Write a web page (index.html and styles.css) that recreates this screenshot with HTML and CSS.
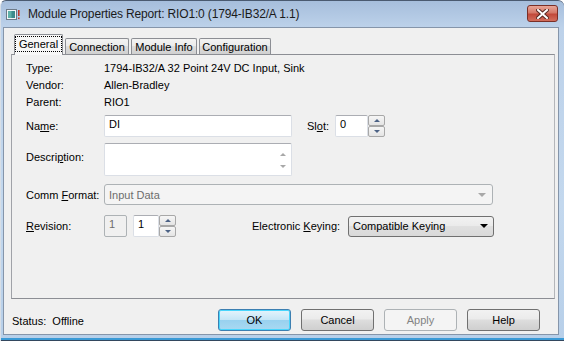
FILE: index.html
```html
<!DOCTYPE html>
<html lang="en">
<head>
  <meta charset="UTF-8" />
  <title>Module Properties Report</title>
  <link rel="stylesheet" href="styles.css">
</head>
<body>

  <div class="window">
    <div class="titlebar">
      <svg class="app-icon" width="14" height="11" viewBox="0 0 14 11">
        <rect x="0.5" y="0.5" width="10" height="10" fill="#f4f6f8" stroke="#6d7a88"/>
        <rect x="2" y="2" width="7" height="7" fill="#3d8a8c"/>
        <rect x="2" y="2" width="3.5" height="7" fill="#5fb0a8"/>
        <rect x="12" y="1" width="1.6" height="6" fill="#c0392b"/>
        <rect x="12" y="8.5" width="1.6" height="1.6" fill="#c0392b"/>
      </svg>
      <span class="title">Module Properties Report: RIO1:0 (1794-IB32/A 1.1)</span>
      <div class="close-btn">
        <svg width="13" height="10" viewBox="0 0 13 10">
          <path d="M2 1 L11 9 M11 1 L2 9" stroke="#5a2a24" stroke-width="4" stroke-linecap="square"/>
          <path d="M2 1 L11 9 M11 1 L2 9" stroke="#ffffff" stroke-width="2" stroke-linecap="square"/>
        </svg>
      </div>
    </div>

    <div class="client">
      <div class="tabs">
        <div class="tab active"><span class="focus">General</span></div>
        <div class="tab w-conn">Connection</div>
        <div class="tab w-info">Module Info</div>
        <div class="tab w-conf">Configuration</div>
      </div>

      <div class="panel">
        <div class="info-row"><span class="label">Type:</span><span>1794-IB32/A 32 Point 24V DC Input, Sink</span></div>
        <div class="info-row"><span class="label">Vendor:</span><span>Allen-Bradley</span></div>
        <div class="info-row"><span class="label">Parent:</span><span>RIO1</span></div>

        <div class="row name-row">
          <span class="label">Na<u>m</u>e:</span>
          <div class="textbox name-box">DI</div>
          <span class="slot-label">Sl<u>o</u>t:</span>
          <div class="textbox slot-box">0</div>
          <div class="spinner">
            <div class="spin-btn"><span class="tri-up"></span></div>
            <div class="spin-btn"><span class="tri-down"></span></div>
          </div>
        </div>

        <div class="row desc-row">
          <span class="label">Descri<u>p</u>tion:</span>
          <div class="textbox desc-box">
            <div class="scroll-arrows">
              <span class="tri-up grey"></span>
              <span class="tri-down grey"></span>
            </div>
          </div>
        </div>

        <div class="row comm-row">
          <span class="label">Comm <u>F</u>ormat:</span>
          <div class="combo disabled comm-box">
            <span>Input Data</span>
            <span class="tri-down grey big"></span>
          </div>
        </div>

        <div class="row rev-row">
          <span class="label"><u>R</u>evision:</span>
          <div class="textbox disabled major-box">1</div>
          <div class="textbox minor-box">1</div>
          <div class="spinner">
            <div class="spin-btn"><span class="tri-up"></span></div>
            <div class="spin-btn"><span class="tri-down"></span></div>
          </div>
          <span class="keying-label">Electronic <u>K</u>eying:</span>
          <div class="combo keying-box">
            <span>Compatible Keying</span>
            <span class="tri-down black big"></span>
          </div>
        </div>
      </div>

      <div class="footer">
        <span class="status">Status:&nbsp; Offline</span>
        <div class="buttons">
          <button class="btn default">OK</button>
          <button class="btn">Cancel</button>
          <button class="btn" disabled>Apply</button>
          <button class="btn">Help</button>
        </div>
      </div>
    </div>
  </div>

</body>
</html>
```

FILE: styles.css
```css
body {
  margin: 0;
  font-family: "Liberation Sans", Arial, sans-serif;
  font-size: 11px;
  color: #000;
}

.window {
  width: 564px;
  height: 341px;
  box-sizing: border-box;
  display: flex;
  flex-direction: column;
  background: linear-gradient(to bottom, #a6bedc, #bdd2ea 27px, #c3d8ee 60%, #b7cfe9);
  border-top: 1px solid #4a5a70;
  border-left: 1px solid #d7dee6;
  border-radius: 6px 6px 0 0;
  padding: 0 5px 6px 2px;
  box-shadow: inset 0 -1px 0 #33475e, inset 0 -3px 0 #3a9ad6;
}

/* title bar */
.titlebar {
  height: 26px;
  display: flex;
  align-items: center;
}

.app-icon {
  margin-left: 3px;
  flex: none;
}

.title {
  margin-left: 8px;
  font-family: "Liberation Sans", Arial, sans-serif;
  font-size: 12px;
  letter-spacing: -0.15px;
  color: #1b1b1b;
  flex: 1;
  padding-bottom: 1px;
}

.close-btn {
  align-self: flex-start;
  margin-top: 4px;
  margin-right: 1px;
  width: 31px;
  height: 17px;
  box-sizing: border-box;
  border: 1px solid #7a2f27;
  border-radius: 3px;
  background: linear-gradient(to bottom, #e8a597, #d47868 45%, #c2493a 55%, #d26e5d);
  display: flex;
  align-items: center;
  justify-content: center;
}

/* client area */
.client {
  flex: 1;
  background: #f0f0f0;
  border: 1px solid #8595aa;
  display: flex;
  flex-direction: column;
}

.tabs {
  height: 20px;
  margin-top: 6px;
  padding-left: 10px;
  display: flex;
  align-items: flex-end;
  gap: 2px;
  position: relative;
  z-index: 1;
}

.tab {
  height: 16px;
  box-sizing: border-box;
  border: 1px solid #8c8e94;
  border-bottom: none;
  border-radius: 2px 2px 0 0;
  background: linear-gradient(to bottom, #f3f3f3, #ebebeb 45%, #dddddd 50%, #d0d0d0);
  display: flex;
  align-items: center;
  justify-content: center;
  padding-top: 1px;
}

.tab.active {
  width: 49px;
  height: 21px;
  margin-bottom: -1px;
  background: #f7f7f7;
  padding-top: 0;
  padding-bottom: 2px;
}

.focus {
  border: 1px dotted #000;
  padding: 1px 3px 0;
  line-height: 13px;
}

.w-conn { width: 64px; }
.w-info { width: 66px; }
.w-conf { width: 72px; }

.panel {
  margin-left: 7px;
  width: 544px;
  height: 245px;
  box-sizing: border-box;
  border: 1px solid #8c8e94;
  border-left-color: #a0a2a8;
  border-right-color: #b4b6ba;
  padding: 4px 0 0 14px;
}

.info-row {
  height: 17px;
  display: flex;
  align-items: center;
}

.label {
  width: 78px;
  flex: none;
}

.row {
  display: flex;
  align-items: center;
}

.textbox {
  box-sizing: border-box;
  background: #fff;
  border: 1px solid #dbdfe6;
  border-top-color: #abadb3;
  border-radius: 2px;
  padding: 2px 4px;
}

.name-row {
  margin-top: 5px;
  height: 22px;
}

.name-box {
  width: 188px;
  height: 22px;
}

.slot-label {
  margin-left: 15px;
  width: 28px;
}

.slot-box {
  width: 33px;
  height: 22px;
}

.spinner {
  width: 17px;
  height: 22px;
  display: flex;
  flex-direction: column;
}

.spin-btn {
  flex: 1;
  box-sizing: border-box;
  border: 1px solid #a8a8a8;
  border-radius: 2px;
  background: linear-gradient(to bottom, #f6f6f6, #e4e4e4);
  display: flex;
  align-items: center;
  justify-content: center;
}

.tri-up,
.tri-down {
  width: 0;
  height: 0;
  border-left: 3px solid transparent;
  border-right: 3px solid transparent;
}

.tri-up { border-bottom: 3px solid #4c6285; }
.tri-down { border-top: 3px solid #4c6285; }
.tri-up.grey { border-bottom-color: #a8a8a8; }
.tri-down.grey { border-top-color: #a8a8a8; }

.tri-down.big {
  border-left-width: 4px;
  border-right-width: 4px;
  border-top-width: 4px;
}

.tri-down.black { border-top-color: #000; }

.desc-row {
  margin-top: 6px;
  height: 33px;
  align-items: flex-start;
}

.desc-row .label {
  margin-top: 8px;
}

.desc-box {
  width: 188px;
  height: 33px;
  display: flex;
  justify-content: flex-end;
  padding: 0;
}

.scroll-arrows {
  width: 17px;
  display: flex;
  flex-direction: column;
  justify-content: space-around;
  align-items: center;
  padding: 4px 0 3px;
}

.comm-row {
  margin-top: 8px;
  height: 21px;
}

.combo {
  box-sizing: border-box;
  height: 21px;
  border: 1px solid #707070;
  border-radius: 3px;
  background: linear-gradient(to bottom, #f2f2f2, #ebebeb 45%, #dddddd 50%, #cfcfcf);
  display: flex;
  align-items: center;
  justify-content: space-between;
  padding: 0 6px 0 4px;
}

.combo.disabled {
  background: #f4f4f4;
  border-color: #adb2b5;
  color: #6d6d6d;
}

.comm-box {
  width: 389px;
}

.rev-row {
  margin-top: 10px;
  height: 22px;
}

.major-box {
  width: 23px;
  height: 22px;
  background: #f0f0f0;
  border-color: #adb2b5;
  color: #6d6d6d;
}

.minor-box {
  margin-left: 6px;
  width: 26px;
  height: 22px;
}

.keying-label {
  margin-left: 76px;
  width: 96px;
}

.keying-box {
  width: 146px;
  height: 21px;
  background: linear-gradient(to bottom, #f2f2f2, #ebebeb 45%, #e0e0e0 50%, #d9d9d9);
  padding-right: 5px;
}

/* bottom bar */
.footer {
  flex: 1;
  display: flex;
  justify-content: space-between;
  align-items: flex-start;
  padding: 10px 18px 0 8px;
}

.status {
  margin-top: 6px;
}

.buttons {
  display: flex;
  gap: 10px;
}

.btn {
  width: 73px;
  height: 22px;
  font-family: "Liberation Sans", Arial, sans-serif;
  font-size: 11px;
  color: #000;
  border: 1px solid #707070;
  border-radius: 3px;
  background: linear-gradient(to bottom, #f2f2f2, #ebebeb 45%, #dddddd 50%, #cfcfcf);
  padding: 0;
}

.btn.default {
  border-color: #3c7fb1;
  background: linear-gradient(to bottom, #e5f4fc, #c4e5f6 50%, #98d1ef 50%, #a8d9f2);
  box-shadow: inset 0 0 0 1px #48d5fc;
}

.btn:disabled {
  border-color: #adb2b5;
  background: #f4f4f4;
  color: #838383;
}
```
